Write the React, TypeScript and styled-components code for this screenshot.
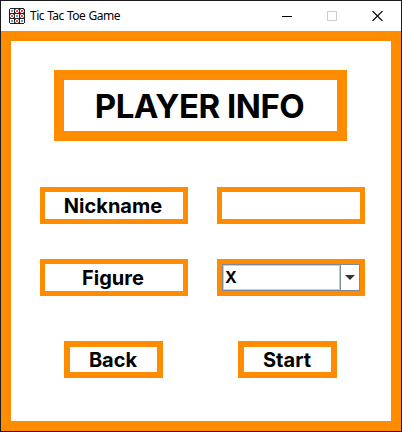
import React from "react";
import styled, { createGlobalStyle } from "styled-components";

const ORANGE = "#ff8c00";

const GlobalStyle = createGlobalStyle`
  * { box-sizing: border-box; }
  body { margin: 0; background: #1c1a1e; overflow: hidden; }
`;

const Window = styled.div`
  width: 402px;
  height: 432px;
  border: 1px solid #1c1a1e;
  display: flex;
  flex-direction: column;
  background: #fff;
`;

const TitleBar = styled.header`
  height: 30px;
  flex: none;
  display: flex;
  align-items: center;
  padding: 0 18px 0 8px;
`;

const WindowTitle = styled.span`
  flex: 1;
  margin-left: 5px;
  font: 12px/16px "Noto Sans", "Open Sans", sans-serif;
  letter-spacing: -0.5px;
  word-spacing: 0.5px;
  white-space: pre;
  color: #000;
`;

const Controls = styled.div`
  display: flex;
  gap: 35px;
  svg { display: block; }
`;

const Panel = styled.main`
  flex: 1;
  border: 10px solid ${ORANGE};
  padding-top: 29px;
  display: flex;
  flex-direction: column;
  color: #000;
  font-family: Inter, sans-serif;
  font-weight: 700;
`;

const Heading = styled.h1`
  width: 293px;
  height: 71px;
  margin: 0 0 46px 43px;
  border: 10px solid ${ORANGE};
  display: flex;
  align-items: center;
  justify-content: center;
  font-size: 33px;
  line-height: 40px;
  letter-spacing: -0.5px;
  padding-right: 2px;
  white-space: nowrap;
`;

const Fields = styled.div`
  display: grid;
  grid-template-columns: 148px 148px;
  grid-auto-rows: 37px;
  gap: 35px 29px;
  margin-left: 29px;
`;

const Label = styled.div`
  border: 5px solid ${ORANGE};
  display: flex;
  align-items: center;
  justify-content: center;
  padding-right: 2px;
  font-size: 20px;
  line-height: 24px;
`;

const TextInput = styled.input`
  min-width: 0;
  width: 148px;
  border: 5px solid ${ORANGE};
  border-radius: 0;
  background: #fff;
  outline: none;
  font: 700 16px Inter, sans-serif;
`;

const Combo = styled.div`
  border: 5px solid ${ORANGE};
  display: flex;
`;

const ComboBody = styled.div`
  flex: 1;
  border: 1px solid #7a8a99;
  display: flex;
`;

const ComboValue = styled.div`
  flex: 1;
  border: 1px solid #b8cfe5;
  padding-left: 1px;
  font-size: 16px;
  line-height: 23px;
`;

const ComboArrow = styled.div`
  width: 19px;
  border-left: 1px solid #7a8a99;
  display: flex;
  align-items: center;
  justify-content: center;
`;

const Actions = styled.div`
  display: flex;
  gap: 75px;
  margin: 45px 0 0 53px;
`;

const ActionButton = styled.button`
  width: 99px;
  height: 37px;
  padding: 0 1px 0 0;
  border: 6px solid ${ORANGE};
  background: #fff;
  color: #000;
  font: 700 20px/24px Inter, sans-serif;
`;

const BOARD = ["b", "r", "r", "r", "b", "r", "b", "r", "b"];

function BoardIcon() {
  return (
    <svg width="16" height="16" viewBox="0 0 16 16" shapeRendering="crispEdges">
      <path d="M1 0h14v1h1v14h-1v1H1v-1H0V1h1z" fill="#222" />
      {BOARD.map((mark, i) => {
        const x = 1 + (i % 3) * 5;
        const y = 1 + Math.floor(i / 3) * 5;
        return (
          <g key={i}>
            <rect x={x} y={y} width="4" height="4" fill="#fff" />
            {mark === "b" ? (
              <rect x={x + 1} y={y + 1} width="2" height="2" fill="#4a9be8" />
            ) : (
              <path
                d={`M${x} ${y}h1v1h2v-1h1v1h-1v2h1v1h-1v-1h-2v1h-1v-1h1v-2h-1z`}
                fill="#e8474c"
              />
            )}
          </g>
        );
      })}
    </svg>
  );
}

export default function App() {
  return (
    <>
      <GlobalStyle />
      <Window>
        <TitleBar>
          <BoardIcon />
          <WindowTitle>Tic Tac Toe Game</WindowTitle>
          <Controls>
            <svg width="10" height="10" shapeRendering="crispEdges">
              <path d="M0 5.5h10" stroke="#000" />
            </svg>
            <svg width="10" height="10" shapeRendering="crispEdges">
              <rect x="0.5" y="0.5" width="9" height="9" fill="none" stroke="#ccc" />
            </svg>
            <svg width="11" height="10">
              <path d="M.5 0l10 10M10.5 0L.5 10" stroke="#000" strokeWidth="1.1" />
            </svg>
          </Controls>
        </TitleBar>
        <Panel>
          <Heading>PLAYER INFO</Heading>
          <Fields>
            <Label>Nickname</Label>
            <TextInput aria-label="Nickname" />
            <Label>Figure</Label>
            <Combo>
              <ComboBody>
                <ComboValue>X</ComboValue>
                <ComboArrow>
                  <svg width="10" height="5">
                    <path d="M0 0h10L5 5z" fill="#333" />
                  </svg>
                </ComboArrow>
              </ComboBody>
            </Combo>
          </Fields>
          <Actions>
            <ActionButton>Back</ActionButton>
            <ActionButton>Start</ActionButton>
          </Actions>
        </Panel>
      </Window>
    </>
  );
}
